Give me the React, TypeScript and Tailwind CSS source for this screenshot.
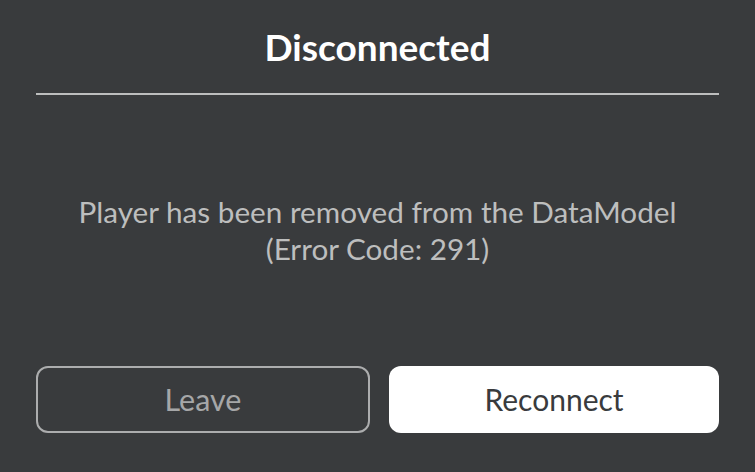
export default function App() {
  return (
    <div
      className="w-[755px] h-[472px] bg-[#393b3d] flex flex-col px-[36px]"
      style={{ fontFamily: 'Lato, "Noto Sans", sans-serif' }}
    >
      {/* Titulo */}
      <div className="h-[93px] flex items-center justify-center">
        <h1 className="text-white font-bold text-[37px]">Disconnected</h1>
      </div>
      <div className="h-[2px] bg-[#bdbebe]" />
      {/* Mensaje */}
      <div className="flex-1 flex flex-col items-center justify-center text-[#bdbebe] text-[29.7px] leading-[37px] text-center pb-[2px]">
        <p>Player has been removed from the DataModel</p>
        <p>(Error Code: 291)</p>
      </div>
      {/* Botones */}
      <div className="flex gap-[19px] mb-[39px]">
        <button className="flex-1 h-[67px] rounded-[12px] border-2 border-[#acadae] text-[#a6a7a8] text-[30.5px]">
          Leave
        </button>
        <button className="flex-1 h-[67px] rounded-[12px] bg-white text-[#393b3d] text-[30px]">
          Reconnect
        </button>
      </div>
    </div>
  );
}
